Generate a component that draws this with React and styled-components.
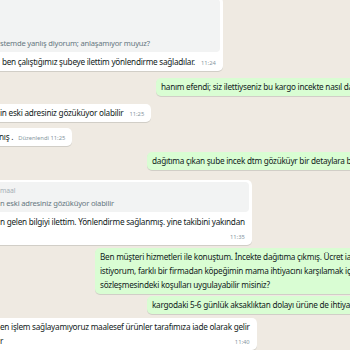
import React from "react";
import styled, { createGlobalStyle } from "styled-components";

const GlobalStyle = createGlobalStyle`
  html, body {
    margin: 0;
    padding: 0;
  }
  body {
    background: #efeae2;
    font-family: "Noto Sans", "Open Sans", sans-serif;
    overflow: hidden;
  }
`;

const Chat = styled.div`
  width: 350px;
  height: 350px;
  overflow: hidden;
  background: #efeae2;
  display: flex;
  flex-direction: column;
  align-items: flex-start;
`;

const Bubble = styled.div`
  margin-top: ${p => p.$gap || 0}px;
  margin-left: ${p => (p.$out ? p.$indent : p.$shift || -8)}px;
  padding: 2px 7px 2px ${p => (p.$out ? 5 : 8)}px;
  background: ${p => (p.$out ? "#d9fdd3" : "#ffffff")};
  border-radius: 5px;
  box-shadow: 0 1px 0.5px rgba(11, 20, 26, 0.13);
  white-space: nowrap;
  font-size: 8.2px;
  letter-spacing: -0.25px;
  line-height: 14px;
  color: #111b21;
  flex-shrink: 0;
`;

const Quote = styled.div`
  margin: 0 -4px 3px -5px;
  padding: ${p => p.$top || 3}px 6px 2px 5px;
  background: #f2f3f3;
  border-radius: 4px;
`;

const Author = styled.div`
  font-size: 6.8px;
  letter-spacing: -0.1px;
  line-height: 12px;
  color: #a4aeb3;
`;

const QuoteText = styled.div`
  font-size: 7.6px;
  letter-spacing: -0.2px;
  line-height: 13px;
  color: #667781;
`;

const LastLine = styled.div`
  display: flex;
  align-items: flex-end;
`;

const Text = styled.span`
  min-height: 14px;
`;

const Meta = styled.span`
  margin: 0 0 2px auto;
  padding-left: 6px;
  font-size: 5.8px;
  letter-spacing: 0;
  line-height: 8px;
  color: #8696a0;
`;

const Edited = styled(Meta)`
  margin-left: 0;
  padding-left: 5px;
`;

export default function App() {
  return (
    <>
      <GlobalStyle />
      <Chat>
        <Bubble $gap={-3}>
          <Quote $top={38}>
            <QuoteText>stemde yanlış diyorum; anlaşamıyor muyuz?</QuoteText>
          </Quote>
          <LastLine>
            <Text>{"\u00a0"}ben çalıştığımız şubeye ilettim yönlendirme sağladılar.</Text>
            <Meta>11:24</Meta>
          </LastLine>
        </Bubble>

        <Bubble $out $indent={156} $gap={7}>
          hanım efendi; siz ilettiyseniz bu kargo incekte nasıl dağıtımda görünüyor
        </Bubble>

        <Bubble $gap={8}>
          <LastLine>
            <Text>in eski adresiniz gözüküyor olabilir</Text>
            <Meta>11:25</Meta>
          </LastLine>
        </Bubble>

        <Bubble $gap={6} $shift={-9}>
          <LastLine>
            <Text>nış .</Text>
            <Edited>Düzenlendi 11:25</Edited>
          </LastLine>
        </Bubble>

        <Bubble $out $indent={147} $gap={6}>
          dağıtıma çıkan şube incek dtm gözüküyr bir detaylara bakar mısınız
        </Bubble>

        <Bubble $gap={10}>
          <Quote>
            <Author>maal</Author>
            <QuoteText>n eski adresiniz gözüküyor olabilir</QuoteText>
          </Quote>
          <div>n gelen bilgiyi ilettim. Yönlendirme sağlanmış. yine takibini yakından</div>
          <LastLine>
            <Text />
            <Meta>11:35</Meta>
          </LastLine>
        </Bubble>

        <Bubble $out $indent={95} $gap={3}>
          Ben müşteri hizmetleri ile konuştum. İncekte dağıtıma çıkmış. Ücret iadesi
          <br />
          istiyorum, farklı bir firmadan köpeğimin mama ihtiyacını karşılamak için
          <br />
          sözleşmesindeki koşulları uygulayabilir misiniz?
        </Bubble>

        <Bubble $out $indent={147} $gap={2}>
          kargodaki 5-6 günlük aksaklıktan dolayı ürüne de ihtiyacım kalmadı
        </Bubble>

        <Bubble $gap={4}>
          <div>en işlem sağlayamıyoruz maalesef ürünler tarafımıza iade olarak gelir</div>
          <LastLine>
            <Text>r</Text>
            <Meta>11:40</Meta>
          </LastLine>
        </Bubble>
      </Chat>
    </>
  );
}
